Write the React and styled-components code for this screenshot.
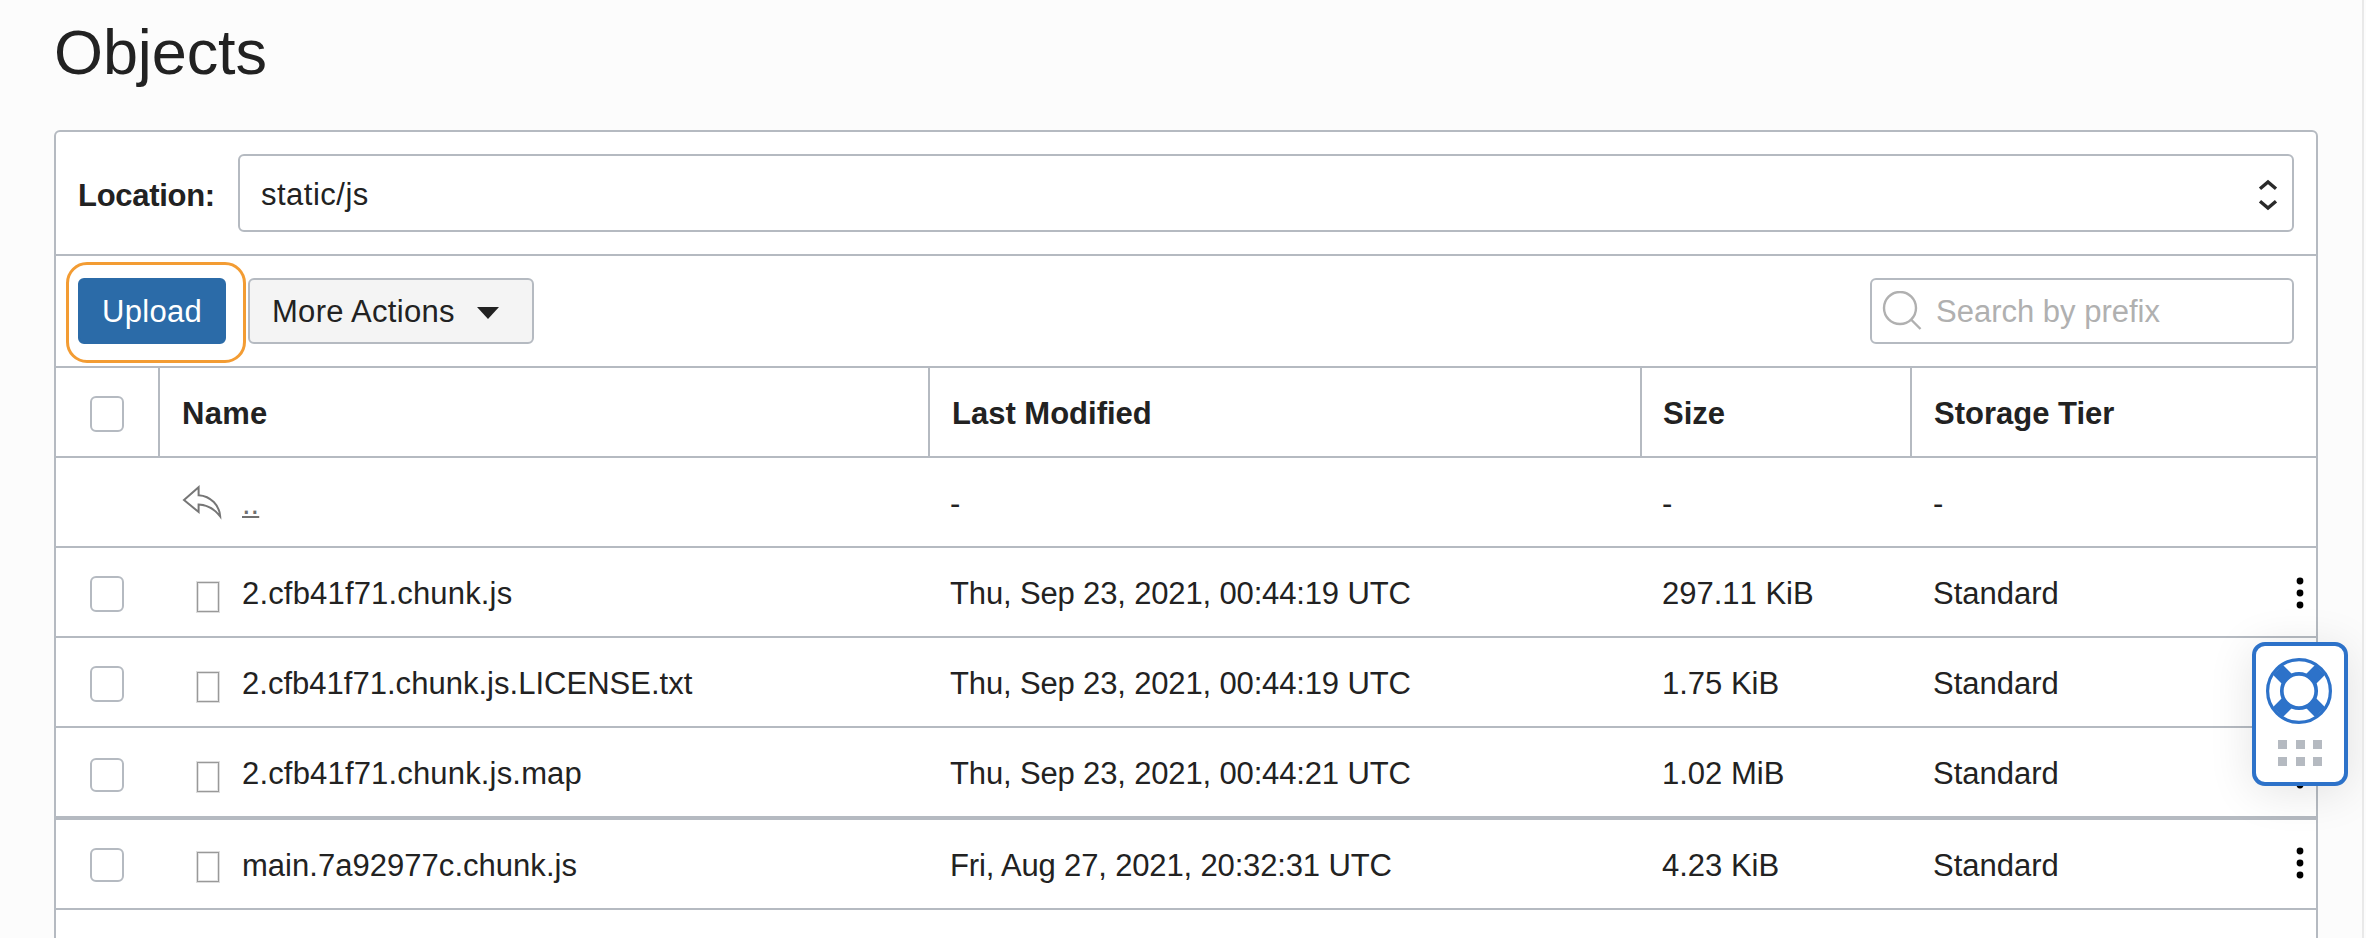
import React from "react";
import styled, { createGlobalStyle } from "styled-components";

const LINE = "#b5bac1";
const INK = "#222";
const BLUE = "#2d72c9";

const Global = createGlobalStyle`
  * { box-sizing: border-box; }
  body { margin: 0; background: #fcfcfc; color: ${INK}; font: 31px/36px "Liberation Sans", Arial, sans-serif; }
  button, input { font: inherit; color: inherit; }
`;

const Page = styled.main`
  position: relative;
  width: 2364px;
  height: 938px;
  overflow: hidden;
  padding: 0 44px 0 54px;
  border-right: 2px solid #e9e9e9;
`;
const Title = styled.h1`
  margin: 0;
  height: 130px;
  padding-top: 16px;
  font-size: 63px;
  line-height: 72px;
  font-weight: 400;
  letter-spacing: -0.1px;
`;
const Panel = styled.section`
  height: 900px;
  background: #fff;
  border: 2px solid ${LINE};
  border-radius: 6px;
`;
const LocationBar = styled.div`
  display: flex;
  align-items: center;
  height: 124px;
  padding: 0 22px;
  border-bottom: 2px solid ${LINE};
`;
const LocationLabel = styled.label`
  width: 160px;
  padding-top: 6px;
  font-weight: 700;
  letter-spacing: -0.3px;
`;
const LocationSelect = styled.div`
  flex: 1;
  height: 78px;
  display: flex;
  align-items: center;
  justify-content: space-between;
  padding: 4px 14px 0 21px;
  border: 2px solid ${LINE};
  border-radius: 6px;
  letter-spacing: 0.5px;
`;
const Toolbar = styled.div`
  display: flex;
  align-items: center;
  height: 112px;
  padding: 0 22px;
  border-bottom: 2px solid ${LINE};
`;
const UploadSlot = styled.div`
  position: relative;
  margin-right: 22px;
`;
const Highlight = styled.span`
  position: absolute;
  inset: -16px -19.5px -19px -12.5px;
  border: 3px solid #f39c33;
  border-radius: 21px;
`;
const Button = styled.button`
  display: flex;
  align-items: center;
  height: 66px;
  padding: 2px 22px 0;
  width: ${(p) => p.$width}px;
  border: 2px solid ${(p) => (p.$primary ? "#2b6ba8" : LINE)};
  border-radius: 6px;
  background: ${(p) => (p.$primary ? "#2b6ba8" : "#f4f4f4")};
  color: ${(p) => (p.$primary ? "#fff" : INK)};
  letter-spacing: 0.3px;
`;
const Caret = styled.svg`
  margin: 2px 0 0 22px;
`;
const Search = styled.div`
  display: flex;
  align-items: center;
  gap: 14px;
  width: 424px;
  height: 66px;
  margin-left: auto;
  padding: 2px 0 0 10px;
  border: 2px solid ${LINE};
  border-radius: 6px;
`;
const Magnifier = styled.svg`
  margin-top: -3px;
`;
const SearchInput = styled.input`
  width: 340px;
  height: 36px;
  padding: 0;
  border: 0;
  outline: 0;
  background: none;
  &::placeholder { color: #b0b0b0; opacity: 1; }
`;
const Row = styled.div`
  display: grid;
  grid-template-columns: 104px 770px 712px 270px 1fr;
  height: ${(p) => (p.$thick ? 92 : 90)}px;
  border-bottom: ${(p) => (p.$thick ? 4 : 2)}px solid ${LINE};
`;
const Cell = styled.div`
  display: flex;
  align-items: center;
  padding: 4px 0 0 20px;
  letter-spacing: ${(p) => p.$track || 0}px;
`;
const HeadCell = styled(Cell)`
  padding: 4px 0 0 ${(p) => p.$inset || 22}px;
  border-right: 2px solid ${LINE};
  font-weight: 700;
  &:last-child { border-right: 0; }
`;
const CheckCell = styled(Cell)`
  padding: ${(p) => p.$drop}px 0 0 34px;
`;
const Checkbox = styled.span`
  width: 34px;
  height: ${(p) => p.$size}px;
  border: 2px solid ${LINE};
  border-radius: 6px;
`;
const SizeCell = styled(Cell)`
  font-kerning: none;
`;
const TierCell = styled(Cell)`
  justify-content: space-between;
  padding: 4px 12px 0 21px;
`;
const Menu = styled.svg`
  margin-top: ${(p) => p.$shift}px;
`;
const IconSlot = styled.span`
  display: flex;
  width: 62px;
`;
const FileBox = styled.span`
  width: 22px;
  height: 30px;
  margin: ${(p) => p.$drop}px 0 0 17px;
  border: 1px solid #999;
  box-shadow: 0 0 0 1px #dedede, inset 0 0 0 1px #e4e4e4;
`;
const Up = styled.a`
  color: #707070;
  text-decoration: underline;
  text-decoration-thickness: 2px;
  text-underline-offset: 2px;
  text-decoration-skip-ink: none;
`;
const Help = styled.aside`
  position: absolute;
  left: 2252px;
  top: 642px;
  width: 96px;
  height: 144px;
  display: flex;
  flex-direction: column;
  align-items: center;
  padding-top: 12px;
  gap: 16px;
  background: #fff;
  border: 4px solid ${BLUE};
  border-radius: 13px;
  box-shadow: 0 6px 46px rgba(0, 0, 0, 0.11);
`;
const Buoy = styled.svg`
  margin-right: 2px;
`;
const Dots = styled.div`
  display: grid;
  grid-template-columns: repeat(3, 9px);
  gap: 8px 8.5px;
`;
const Dot = styled.i`
  height: 9px;
  background: ${LINE};
`;

const Kebab = ({ shift = -2 }) => (
  <Menu $shift={shift} width="8" height="32" viewBox="0 0 8 32">
    {[4, 16, 28].map((y) => <circle key={y} cx="4" cy={y} r="3.4" fill="#000" />)}
  </Menu>
);

const FILES = [
  { name: "2.cfb41f71.chunk.js", track: 0.17, date: "Thu, Sep 23, 2021, 00:44:19 UTC", size: "297.11 KiB" },
  { name: "2.cfb41f71.chunk.js.LICENSE.txt", track: 0.02, date: "Thu, Sep 23, 2021, 00:44:19 UTC", size: "1.75 KiB" },
  { name: "2.cfb41f71.chunk.js.map", track: 0.17, date: "Thu, Sep 23, 2021, 00:44:21 UTC", size: "1.02 MiB", thick: true, box: 34, drop: 6 },
  { name: "main.7a92977c.chunk.js", track: 0.03, date: "Fri, Aug 27, 2021, 20:32:31 UTC", size: "4.23 KiB", box: 34, drop: 2, fileDrop: 2, menu: -6 },
];

export default function App() {
  return (
    <Page>
      <Global />
      <Title>Objects</Title>
      <Panel>
        <LocationBar>
          <LocationLabel>Location:</LocationLabel>
          <LocationSelect>
            static/js
            <svg width="20" height="36" viewBox="0 0 20 36" fill="none" stroke="#2a2a2a" strokeWidth="3.4">
              <path d="M2 11.8 10 5l8 6.8M2 24.2 10 31l8-6.8" />
            </svg>
          </LocationSelect>
        </LocationBar>
        <Toolbar>
          <UploadSlot>
            <Button $primary $width={148}>Upload</Button>
            <Highlight />
          </UploadSlot>
          <Button $width={286}>
            More Actions
            <Caret width="22" height="12" viewBox="0 0 22 12"><path d="M0 0h22L11 12z" fill="#222" /></Caret>
          </Button>
          <Search>
            <Magnifier width="40" height="40" viewBox="0 0 40 40" fill="none" stroke="#b0b0b0" strokeWidth="2.4">
              <circle cx="18" cy="17" r="16" />
              <path d="m29 28.5 9.5 9.5" />
            </Magnifier>
            <SearchInput placeholder="Search by prefix" />
          </Search>
        </Toolbar>
        <Row>
          <CheckHead />
          <HeadCell $track={0.3}>Name</HeadCell>
          <HeadCell>Last Modified</HeadCell>
          <HeadCell $inset={21}>Size</HeadCell>
          <HeadCell>Storage Tier</HeadCell>
        </Row>
        <Row>
          <Cell />
          <Cell>
            <IconSlot>
              <svg width="43" height="38" viewBox="0 0 43 38" fill="none" stroke="#767676" strokeWidth="2">
                <path d="M4 15 18.6 2.2v8C31 11 39.5 20.500 40.200 31.500 35 24.500 28 20 18.600 19.500v7.500z" />
              </svg>
            </IconSlot>
            <Up>..</Up>
          </Cell>
          <Cell>-</Cell>
          <Cell>-</Cell>
          <TierCell>-</TierCell>
        </Row>
        {FILES.map((f) => (
          <Row key={f.name} $thick={f.thick}>
            <CheckCell $drop={f.drop || 4}><Checkbox $size={f.box || 36} /></CheckCell>
            <Cell $track={f.track}><IconSlot><FileBox $drop={f.fileDrop || 6} /></IconSlot>{f.name}</Cell>
            <Cell $track={-0.15}>{f.date}</Cell>
            <SizeCell>{f.size}</SizeCell>
            <TierCell>Standard<Kebab shift={f.menu} /></TierCell>
          </Row>
        ))}
        <Row>
          <Cell /><Cell /><Cell /><Cell />
          <TierCell><span /><Kebab /></TierCell>
        </Row>
      </Panel>
      <Help>
        <Buoy width="66" height="66" viewBox="-33 -33 66 66" fill="none" stroke={BLUE}>
          <circle r="31.400" strokeWidth="3.2" />
          <circle r="17.200" strokeWidth="3.700" />
          <path strokeWidth="14" d="M12 12l9.200 9.200M-12 12l-9.200 9.200M12-12l9.200-9.200M-12-12l-9.200-9.200" />
        </Buoy>
        <Dots>{[0, 1, 2, 3, 4, 5].map((i) => <Dot key={i} />)}</Dots>
      </Help>
    </Page>
  );
}

function CheckHead() {
  return (
    <HeadCell $inset={34}>
      <Checkbox $size={36} />
    </HeadCell>
  );
}
